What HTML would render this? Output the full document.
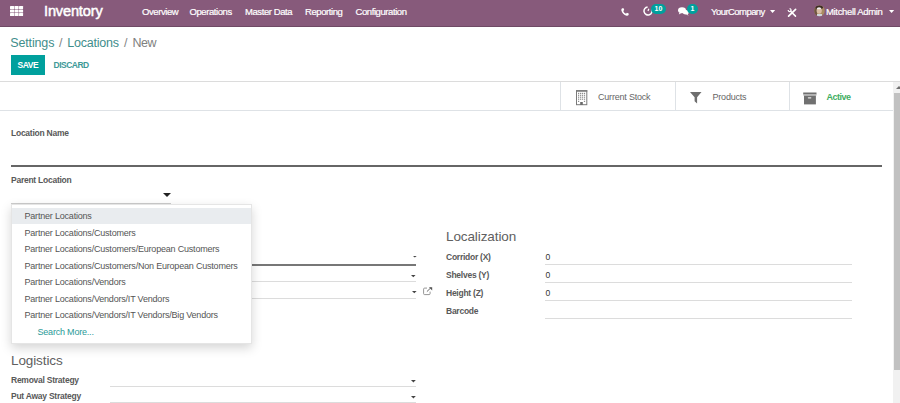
<!DOCTYPE html>
<html><head><meta charset="utf-8">
<style>
*{box-sizing:border-box;margin:0;padding:0}
html,body{width:900px;height:403px;overflow:hidden;background:#fff}
body{position:relative;font-family:"Liberation Sans",sans-serif;color:#4c4c4c}
.a{position:absolute;white-space:nowrap;line-height:1}
#nav{position:absolute;left:0;top:0;width:900px;height:27px;background:#875A7B;border-bottom:1px solid #6f4a65}
.nv{color:#fff;font-size:9.5px;letter-spacing:-0.42px;-webkit-text-stroke:0.2px #fff}
.bc{font-size:12.5px;color:#3f8e8c}
.lbl{font-weight:bold;font-size:8.5px;color:#595959;letter-spacing:-0.25px}
.hl{position:absolute;height:1px;background:#dee2e6}
.dd{font-size:9px;color:#555;letter-spacing:-0.2px}
.caret{position:absolute;width:0;height:0;border-left:3px solid transparent;border-right:3px solid transparent;border-top:3px solid #555}
</style></head><body>
<div id="nav">
  <!-- grid icon -->
  <svg class="a" style="left:10px;top:6px" width="14" height="11" viewBox="0 0 14 11"><g fill="#fff"><rect x="0.00" y="0.00" width="4.1" height="3.1" rx="0.6"/><rect x="4.50" y="0.00" width="4.1" height="3.1" rx="0.6"/><rect x="9.00" y="0.00" width="4.1" height="3.1" rx="0.6"/><rect x="0.00" y="3.50" width="4.1" height="3.1" rx="0.6"/><rect x="4.50" y="3.50" width="4.1" height="3.1" rx="0.6"/><rect x="9.00" y="3.50" width="4.1" height="3.1" rx="0.6"/><rect x="0.00" y="7.00" width="4.1" height="3.1" rx="0.6"/><rect x="4.50" y="7.00" width="4.1" height="3.1" rx="0.6"/><rect x="9.00" y="7.00" width="4.1" height="3.1" rx="0.6"/></g></svg>
  <div class="a" style="left:44px;top:3.4px;font-size:15px;color:#fff;letter-spacing:-0.15px;-webkit-text-stroke:0.5px #fff;transform:scaleX(0.97);transform-origin:0 0">Inventory</div>
  <div class="a nv" style="left:142px;top:7px">Overview</div>
  <div class="a nv" style="left:189.5px;top:7px">Operations</div>
  <div class="a nv" style="left:245px;top:7px">Master Data</div>
  <div class="a nv" style="left:305px;top:7px">Reporting</div>
  <div class="a nv" style="left:355.5px;top:7px">Configuration</div>

  <!-- phone -->
  <svg class="a" style="left:621px;top:7.5px" width="8" height="8" viewBox="0 0 8 8"><path d="M1.2 0.3 L2.6 0.2 L3.2 2 L2.2 2.9 Q3 4.9 5 5.8 L5.9 4.8 L7.7 5.4 L7.6 6.9 Q7 7.9 5.6 7.7 Q1.5 6.6 0.3 2.3 Q0.2 0.9 1.2 0.3 Z" fill="#fff"/></svg>
  <!-- clock -->
  <svg class="a" style="left:643px;top:6px" width="10" height="10" viewBox="0 0 10 10"><path d="M8.6 3.2 A4 4 0 1 1 4.6 1" fill="none" stroke="#fff" stroke-width="1.5"/><path d="M5 5 L5.8 2.8" stroke="#fff" stroke-width="1.2"/></svg>
  <div class="a" style="left:651px;top:3.5px;width:15px;height:10px;border-radius:5px;background:#00A09D;color:#fff;font-size:7px;font-weight:bold;text-align:center;line-height:10px">10</div>
  <!-- chat -->
  <svg class="a" style="left:678px;top:7px" width="11" height="9" viewBox="0 0 11 9"><ellipse cx="4" cy="3.3" rx="4" ry="3" fill="#fff"/><path d="M1.5 5.5 L0.8 7.5 L3.5 6" fill="#fff"/><ellipse cx="7.8" cy="5.3" rx="3" ry="2.2" fill="#fff"/><path d="M9.5 7 L10.6 8.8 L8 7.3" fill="#fff"/></svg>
  <div class="a" style="left:687px;top:3.5px;width:11px;height:10px;border-radius:5px;background:#00A09D;color:#fff;font-size:7px;font-weight:bold;text-align:center;line-height:10px">1</div>

  <div class="a nv" style="left:711px;top:7px;letter-spacing:-0.55px">YourCompany</div>
  <svg class="a" style="left:770px;top:9.8px;overflow:visible" width="5.2" height="2.9" viewBox="0 0 5.2 2.9"><path d="M0 0 H5.2 L2.6 2.9 Z" fill="#fff"/></svg>
  <!-- tools -->
  <svg class="a" style="left:784px;top:4px" width="16" height="16" viewBox="0 0 16 16"><path d="M11.6 5.3 L4.6 12.1" stroke="#fff" stroke-width="1.7" stroke-linecap="round"/><path d="M6.6 7.2 L11.5 12.1" stroke="#fff" stroke-width="1.5" stroke-linecap="round"/><path d="M5.6 4.7 A1.45 1.45 0 1 1 4.2 6.1" fill="none" stroke="#fff" stroke-width="1.2"/></svg>
  <!-- avatar -->
  <svg class="a" style="left:813.5px;top:5px" width="11" height="11.5" viewBox="0 0 11 11.5"><defs><clipPath id="av"><ellipse cx="5.5" cy="5.75" rx="5.2" ry="5.6"/></clipPath></defs><g clip-path="url(#av)"><rect width="11" height="11.5" fill="#a88b62"/><rect x="0" y="0" width="3" height="11.5" fill="#6e5540"/><ellipse cx="5.3" cy="2.2" rx="3.6" ry="2" fill="#3b2c24"/><ellipse cx="5.2" cy="5.6" rx="2.6" ry="3.2" fill="#d8bca4"/><ellipse cx="5" cy="3.4" rx="2.2" ry="0.9" fill="#eee"/><rect x="3" y="9" width="5" height="3" fill="#cfd6dc"/></g></svg>
  <div class="a nv" style="left:826px;top:7px;letter-spacing:-0.34px">Mitchell Admin</div>
  <svg class="a" style="left:888.8px;top:9.8px;overflow:visible" width="5.2" height="2.9" viewBox="0 0 5.2 2.9"><path d="M0 0 H5.2 L2.6 2.9 Z" fill="#fff"/></svg>
</div>

<!-- control panel -->
<div class="a bc" style="left:10.3px;top:36.6px;letter-spacing:-0.15px">Settings</div>
<div class="a bc" style="left:59px;top:36.6px;color:#858585">/</div>
<div class="a bc" style="left:67.2px;top:36.6px;letter-spacing:-0.22px">Locations</div>
<div class="a bc" style="left:124px;top:36.6px;color:#858585">/</div>
<div class="a bc" style="left:132.5px;top:36.6px;color:#808080;letter-spacing:-0.55px">New</div>
<div class="a" style="left:10.5px;top:55px;width:34.5px;height:19.5px;background:#00A09D"></div>
<div class="a" style="left:17.5px;top:61px;font-size:8.5px;font-weight:bold;color:#fff;letter-spacing:-0.45px">SAVE</div>
<div class="a" style="left:53.5px;top:61px;font-size:8.5px;font-weight:bold;color:#3e9998;letter-spacing:-0.5px">DISCARD</div>

<div class="hl" style="left:0;top:81px;width:900px;background:#dcdcdc"></div>
<!-- button box -->
<div class="hl" style="left:0;top:110px;width:893px;background:#dee2e6"></div>
<div class="a" style="left:560px;top:82px;width:1px;height:28px;background:#dee2e6"></div>
<div class="a" style="left:675px;top:82px;width:1px;height:28px;background:#dee2e6"></div>
<div class="a" style="left:789px;top:82px;width:1px;height:28px;background:#dee2e6"></div>

<!-- building icon -->
<svg class="a" style="left:575px;top:90px" width="13" height="16" viewBox="0 0 13 16">
  <rect x="1.5" y="0.7" width="10.3" height="14" fill="#fff" stroke="#7a7a7a" stroke-width="1"/>
  <rect x="1" y="0.2" width="11.3" height="1.5" fill="#7a7a7a"/>
  <g fill="#8c8c8c"><rect x="3.00" y="2.80" width="1.2" height="1.2"/><rect x="5.00" y="2.80" width="1.2" height="1.2"/><rect x="6.90" y="2.80" width="1.2" height="1.2"/><rect x="8.90" y="2.80" width="1.2" height="1.2"/><rect x="3.00" y="4.70" width="1.2" height="1.2"/><rect x="5.00" y="4.70" width="1.2" height="1.2"/><rect x="6.90" y="4.70" width="1.2" height="1.2"/><rect x="8.90" y="4.70" width="1.2" height="1.2"/><rect x="3.00" y="6.60" width="1.2" height="1.2"/><rect x="5.00" y="6.60" width="1.2" height="1.2"/><rect x="6.90" y="6.60" width="1.2" height="1.2"/><rect x="8.90" y="6.60" width="1.2" height="1.2"/><rect x="3.00" y="8.60" width="1.2" height="1.2"/><rect x="5.00" y="8.60" width="1.2" height="1.2"/><rect x="6.90" y="8.60" width="1.2" height="1.2"/><rect x="8.90" y="8.60" width="1.2" height="1.2"/><rect x="3.00" y="10.8" width="1.2" height="1.2"/><rect x="8.90" y="10.8" width="1.2" height="1.2"/></g>
  <rect x="5.2" y="12" width="2.6" height="2.9" fill="#6a6a6a"/>
</svg>
<div class="a" style="left:598px;top:93px;font-size:9px;color:#666;letter-spacing:-0.2px">Current Stock</div>
<!-- funnel -->
<svg class="a" style="left:690px;top:92.4px" width="12" height="12" viewBox="0 0 12 12"><path d="M0 0 H11.5 L7.1 5.3 V11.5 L4.6 9.3 V5.3 Z" fill="#6e6e6e"/></svg>
<div class="a" style="left:712.5px;top:93px;font-size:9px;color:#666;letter-spacing:-0.2px">Products</div>
<!-- archive -->
<svg class="a" style="left:803px;top:91.5px" width="14" height="13" viewBox="0 0 14 13"><rect x="0.2" y="0.5" width="13.3" height="2" fill="#707070"/><rect x="0.2" y="2.5" width="13.3" height="1" fill="#b0b0b0"/><rect x="1" y="3.6" width="11.9" height="8.8" fill="#707070"/><rect x="4.8" y="5.2" width="3.6" height="1.2" rx="0.6" fill="#e8e8e8"/></svg>
<div class="a" style="left:826.5px;top:93px;font-size:9px;font-weight:bold;color:#3fae62;letter-spacing:-0.5px">Active</div>

<!-- scrollbar -->
<div class="a" style="left:893px;top:82px;width:7px;height:321px;background:#f1f1f1"></div>
<div class="a" style="left:894px;top:93px;width:6px;height:277px;background:#c1c1c1"></div>
<div class="caret" style="left:895.5px;top:86px;border-top:0;border-bottom:3px solid #707070;border-left-width:3.5px;border-right-width:3.5px"></div>

<!-- form -->
<div class="a lbl" style="left:11px;top:129px">Location Name</div>
<div class="a" style="left:11px;top:165px;width:871px;height:1.5px;background:#666"></div>
<div class="a lbl" style="left:11px;top:176px">Parent Location</div>
<div class="a" style="left:11px;top:203px;width:160px;height:1px;background:#ccc"></div>
<div class="caret" style="left:163px;top:193px;border-top:4px solid #222;border-left-width:4px;border-right-width:4px"></div>

<!-- left group underlying fields -->
<div class="a" style="left:110px;top:264px;width:306px;height:1.5px;background:#777"></div>
<div class="a" style="left:110px;top:281px;width:306px;height:1px;background:#dcdcdc"></div>
<div class="a" style="left:110px;top:298px;width:306px;height:1px;background:#dcdcdc"></div>
<svg class="a" style="left:423px;top:287px" width="10" height="9" viewBox="0 0 10 9"><path d="M4 1.1 H1.6 Q0.6 1.1 0.6 2.1 V6.6 Q0.6 7.6 1.6 7.6 H6.1 Q7.1 7.6 7.1 6.6 V4.6" fill="none" stroke="#8a8a8a" stroke-width="0.9"/><path d="M3.9 4.6 L7.8 0.8" stroke="#666" stroke-width="1"/><path d="M5.9 0.2 H9.2 V3.5 Z" fill="#555"/></svg>

<!-- localization -->
<div class="a" style="left:446px;top:230.3px;font-size:13.5px;color:#606060;letter-spacing:-0.1px">Localization</div>
<div class="a lbl" style="left:446px;top:253px">Corridor (X)</div>
<div class="a lbl" style="left:446px;top:271px">Shelves (Y)</div>
<div class="a lbl" style="left:446px;top:289px">Height (Z)</div>
<div class="a lbl" style="left:446px;top:307px">Barcode</div>
<div class="a" style="left:545.5px;top:253.2px;font-size:8.6px;color:#333">0</div>
<div class="a" style="left:545.5px;top:271.2px;font-size:8.6px;color:#333">0</div>
<div class="a" style="left:545.5px;top:289.2px;font-size:8.6px;color:#333">0</div>
<div class="hl" style="left:545px;top:264px;width:307px;background:#dcdcdc"></div>
<div class="hl" style="left:545px;top:282px;width:307px;background:#dcdcdc"></div>
<div class="hl" style="left:545px;top:300px;width:307px;background:#dcdcdc"></div>
<div class="hl" style="left:545px;top:318px;width:307px;background:#dcdcdc"></div>

<!-- logistics -->
<div class="a" style="left:11px;top:353.5px;font-size:13.5px;color:#606060;letter-spacing:-0.1px">Logistics</div>
<div class="a lbl" style="left:11px;top:376px">Removal Strategy</div>
<div class="a lbl" style="left:11px;top:392px">Put Away Strategy</div>
<div class="hl" style="left:110px;top:386px;width:306px;background:#dcdcdc"></div>
<div class="hl" style="left:110px;top:402px;width:306px;background:#dcdcdc"></div>

<svg class="a" style="left:412.6px;top:256.3px;overflow:visible" width="3.7" height="1.6" viewBox="0 0 3.7 1.6"><path d="M0 0 H3.7 L1.85 1.6 Z" fill="#444"/></svg>
<svg class="a" style="left:411.4px;top:274.8px;overflow:visible" width="4.6" height="2.2" viewBox="0 0 4.6 2.2"><path d="M0 0 H4.6 L2.3 2.2 Z" fill="#444"/></svg>
<svg class="a" style="left:411.5px;top:290.5px;overflow:visible" width="4.6" height="2.3" viewBox="0 0 4.6 2.3"><path d="M0 0 H4.6 L2.3 2.3 Z" fill="#444"/></svg>
<svg class="a" style="left:411.4px;top:379.9px;overflow:visible" width="4.8" height="2.4" viewBox="0 0 4.8 2.4"><path d="M0 0 H4.8 L2.4 2.4 Z" fill="#444"/></svg>
<svg class="a" style="left:411.4px;top:395.6px;overflow:visible" width="4.8" height="2.4" viewBox="0 0 4.8 2.4"><path d="M0 0 H4.8 L2.4 2.4 Z" fill="#444"/></svg>
<!-- dropdown -->
<div class="a" style="left:10.5px;top:204px;width:241px;height:140px;background:#fff;border:1px solid rgba(0,0,0,0.1);box-shadow:0 4px 10px rgba(0,0,0,0.17)">
  <div class="a" style="left:0;top:3px;width:239px;height:16px;background:#e9ecef"></div>
</div>
<div class="a dd" style="left:24.5px;top:212.4px">Partner Locations</div>
<div class="a dd" style="left:24.5px;top:228.9px">Partner Locations/Customers</div>
<div class="a dd" style="left:24.5px;top:245.4px">Partner Locations/Customers/European Customers</div>
<div class="a dd" style="left:24.5px;top:261.9px">Partner Locations/Customers/Non European Customers</div>
<div class="a dd" style="left:24.5px;top:278.4px">Partner Locations/Vendors</div>
<div class="a dd" style="left:24.5px;top:294.9px">Partner Locations/Vendors/IT Vendors</div>
<div class="a dd" style="left:24.5px;top:311.4px">Partner Locations/Vendors/IT Vendors/Big Vendors</div>
<div class="a dd" style="left:37.5px;top:327.9px;color:#2a9a98">Search More...</div>
</body></html>
